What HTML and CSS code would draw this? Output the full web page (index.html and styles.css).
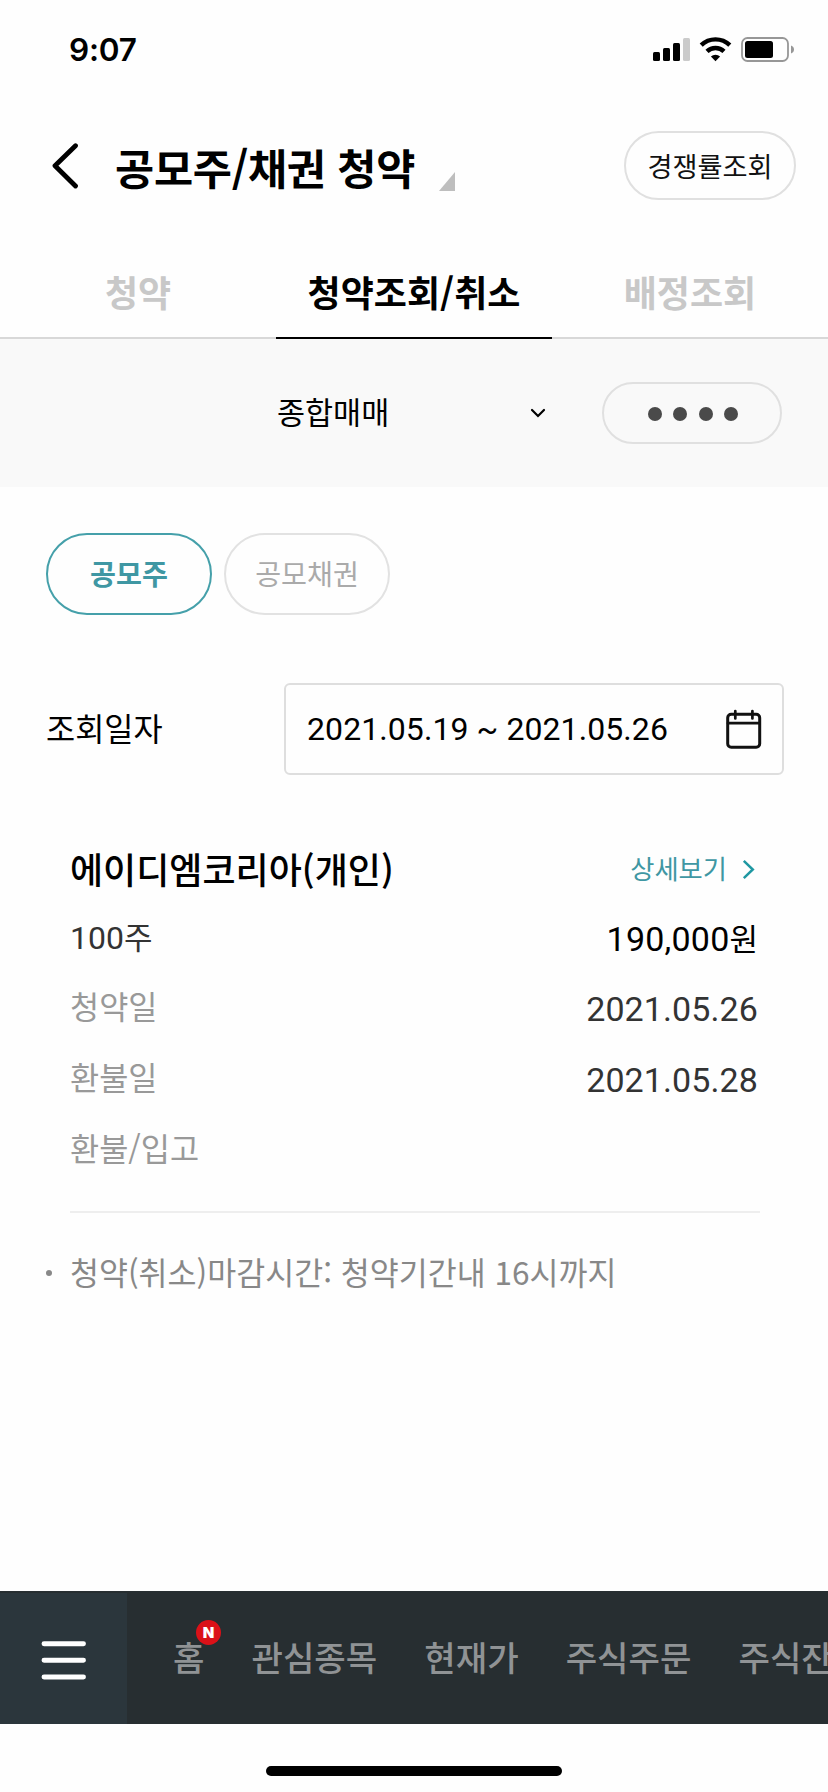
FILE: index.html
```html
<!DOCTYPE html>
<html lang="ko">
<head>
<meta charset="utf-8">
<title>공모주/채권 청약</title>
<link rel="stylesheet" href="styles.css">
</head>
<body>
<div class="status">
  <span class="time">9:07</span>
  <svg class="status-icons" width="142" height="26" viewBox="0 0 142 26">
    <rect x="0" y="15" width="7" height="9" rx="1.5"/>
    <rect x="10" y="11" width="7" height="13" rx="1.5"/>
    <rect x="20" y="6" width="7" height="18" rx="1.5"/>
    <rect x="30" y="1" width="7" height="23" rx="1.5" fill="#cbcbcb"/>
    <g fill="none" stroke="#000" stroke-width="4.4">
      <path d="M48.2 8.2a20.5 20.5 0 0 1 28.6 0"/>
      <path d="M54 14.4a12.2 12.2 0 0 1 17 0"/>
    </g>
    <path d="M62.500 24.200l-4.600-4.700a6.600 6.600 0 0 1 9.200 0z"/>
    <rect x="89" y="1" width="46" height="23" rx="5.500" fill="none" stroke="#979797" stroke-width="1.800"/>
    <rect x="92" y="4" width="28" height="17" rx="2.500"/>
    <path d="M138 8.500q3 1.200 3 4t-3 4z" fill="#979797"/>
  </svg>
</div>

<header class="header">
  <svg class="back" width="28" height="48" viewBox="0 0 28 48"><path d="M23.500 3.700L3 23.700l20.500 20.300" fill="none" stroke="#000" stroke-width="4.800" stroke-linecap="round" stroke-linejoin="round"/></svg>
  <h1 class="title">공모주/채권 청약</h1>
  <svg class="corner" width="16" height="19" viewBox="0 0 16 19"><path d="M16 0v19H0z" fill="#bebebe"/></svg>
  <button class="rate-btn">경쟁률조회</button>
</header>

<nav class="tabs">
  <div class="tab">청약</div>
  <div class="tab active">청약조회/취소</div>
  <div class="tab">배정조회</div>
</nav>

<section class="account">
  <span class="account-name">종합매매</span>
  <svg class="caret" width="16" height="11" viewBox="0 0 16 11"><path d="M2 2l6 6 6-6" fill="none" stroke="#000" stroke-width="2.200" stroke-linecap="round"/></svg>
  <div class="password"><i class="dot"></i><i class="dot"></i><i class="dot"></i><i class="dot"></i></div>
</section>

<main class="content">
  <div class="chips">
    <div class="chip selected">공모주</div>
    <div class="chip">공모채권</div>
  </div>

  <div class="date-row">
    <span class="date-label">조회일자</span>
    <div class="date-box">
      <span>2021.05.19 ~ 2021.05.26</span>
      <svg width="36" height="40" viewBox="0 0 36 40" fill="none" stroke="#111" stroke-width="3" stroke-linecap="round"><rect x="1.700" y="5.200" width="32" height="33" rx="3.500"/><path d="M2 14.200h31.500M9.300 2v7.500M26.400 2v7.500" stroke-width="2.700"/></svg>
    </div>
  </div>

  <section class="detail">
    <div class="row">
      <h2 class="stock">에이디엠코리아(개인)</h2>
      <a class="more">상세보기<svg class="more-arrow" width="13" height="21" viewBox="0 0 13 21"><path d="M1.800 1.800l9 8.700-9 8.700" fill="none" stroke="#1f98a2" stroke-width="2.500"/></svg></a>
    </div>
    <div class="row"><span class="quantity">100<small class="unit">주</small></span><span class="amount">190,000<small class="unit">원</small></span></div>
    <div class="row"><span class="label">청약일</span><span class="value">2021.05.26</span></div>
    <div class="row tall"><span class="label">환불일</span><span class="value">2021.05.28</span></div>
    <div class="row"><span class="label">환불/입고</span></div>
  </section>

  <p class="note"><i class="bullet"></i>청약(취소)마감시간: 청약기간내 16시까지</p>
</main>

<footer class="bottom">
  <div class="menu">
    <svg width="46" height="39" viewBox="0 0 46 39"><path d="M3 2.700h39.500M3 19.300h39.500M3 36h39.500" stroke="#fff" stroke-width="4.900" stroke-linecap="round"/></svg>
  </div>
  <div class="links">
    <span class="link">홈<b class="badge">N</b></span>
    <span class="link">관심종목</span>
    <span class="link">현재가</span>
    <span class="link">주식주문</span>
    <span class="link">주식잔고</span>
  </div>
</footer>
<div class="home-area"><div class="home-bar"></div></div>
</body>
</html>
```
FILE: styles.css
```css
* { box-sizing: border-box; }

body {
  margin: 0;
  width: 828px;
  height: 1792px;
  display: flex;
  flex-direction: column;
  overflow: hidden;
  background: #fefefe;
  color: #000;
  font-family: "Noto Sans CJK KR", sans-serif;
}

svg { display: block; flex: none; }
h1, h2, p { margin: 0; }

.status {
  height: 100px;
  padding: 0 33px 0 69px;
  display: flex;
  justify-content: space-between;
}
.time {
  font: 600 31.500px/40px Inter, sans-serif;
  letter-spacing: -0.2px;
  padding-top: 30px;
}
.status-icons { margin-top: 37px; }

.header {
  height: 137px;
  padding: 0 32px 0 52px;
  display: flex;
  align-items: flex-start;
}
.back { margin-top: 42px; }
.title {
  margin: 37px 0 0 35px;
  width: 324px;
  font-size: 42.6px;
  letter-spacing: -0.3px;
  line-height: 60px;
  font-weight: 700;
  white-space: nowrap;
}
.corner { margin-top: 72px; }
.rate-btn {
  margin: 31px 0 0 auto;
  width: 172px;
  height: 69px;
  padding: 0;
  border: 2px solid #e0e0e0;
  border-radius: 35px;
  background: transparent;
  color: #111;
  font: 400 27.2px/65px "Noto Sans CJK KR", sans-serif;
}

.tabs {
  height: 102px;
  display: grid;
  grid-template-columns: repeat(3, 1fr);
}
.tab {
  padding-top: 31px;
  border-bottom: 2px solid #d8d8d8;
  color: #c8c8c8;
  font-size: 36px;
  line-height: 46px;
  font-weight: 700;
  text-align: center;
}
.active { color: #000; border-color: #000; }

.account {
  height: 148px;
  padding: 0 46px 0 277px;
  display: flex;
  align-items: center;
  background: #f9f9f9;
}
.account-name {
  width: 253px;
  padding-bottom: 4px;
  font-size: 30.5px;
  line-height: 44px;
}
.password {
  margin-left: auto;
  width: 180px;
  height: 62px;
  padding: 2px 0 0 2px;
  border: 2px solid #e0e0e0;
  border-radius: 31px;
  display: flex;
  align-items: center;
  justify-content: center;
  gap: 11.4px;
}
.dot {
  width: 14px;
  height: 14px;
  border-radius: 50%;
  background: #4a4a4a;
}

.content {
  flex: 1;
  padding: 46px 44px 0 46px;
}
.chips { display: flex; gap: 12px; }
.chip {
  width: 166px;
  height: 82px;
  border: 2px solid #e2e2e2;
  border-radius: 41px;
  color: #aaa;
  font-size: 28.2px;
  line-height: 76px;
  text-align: center;
}
.selected {
  border-color: #45a0aa;
  color: #3f97a3;
  font-weight: 700;
}

.date-row {
  margin-top: 68px;
  display: flex;
  align-items: center;
  justify-content: space-between;
}
.date-label {
  padding-bottom: 4px;
  font-size: 31.700px;
  line-height: 44px;
}
.date-box {
  width: 500px;
  height: 92px;
  padding: 0 20px 0 21px;
  border: 2px solid #dedede;
  border-radius: 6px;
  display: flex;
  align-items: center;
  justify-content: space-between;
  font: 400 32px/44px Roboto, sans-serif;
  letter-spacing: 0.08px;
}

.detail {
  margin: 58px 24px 0 24px;
  height: 380px;
  padding: 0 2px 0 0;
  border-bottom: 2px solid #eee;
}
.row {
  height: 70px;
  display: flex;
  align-items: center;
  justify-content: space-between;
}
.tall { height: 72px; }
.stock { font-size: 36px; line-height: 50px; font-weight: 500; }
.more {
  display: flex;
  align-items: center;
  gap: 15px;
  padding-right: 3px;
  color: #3f97a3;
  font-size: 26.300px;
  line-height: 40px;
}
.more-arrow { margin-top: 3px; }
.quantity {
  color: #333;
  font: 400 32px/44px Roboto, "Noto Sans CJK KR", sans-serif;
}
.amount {
  padding-top: 3px;
  font: 400 34px/44px Roboto, "Noto Sans CJK KR", sans-serif;
  letter-spacing: 0.22px;
}
.unit { font-size: 31px; letter-spacing: 0; }
.label {
  padding-bottom: 6px;
  color: #999;
  font-size: 31.700px;
  line-height: 44px;
}
.value {
  padding-top: 2px;
  color: #333;
  font: 400 34px/44px Roboto, sans-serif;
  letter-spacing: 0.1px;
}

.note {
  margin-top: 36px;
  display: flex;
  align-items: center;
  color: #888;
  font-size: 31.500px;
  line-height: 44px;
  white-space: nowrap;
}
.bullet {
  width: 6px;
  height: 6px;
  margin: 3px 18px 0 0;
  border-radius: 50%;
  background: #888;
}

.bottom {
  height: 133px;
  display: flex;
  flex: none;
  background: #272e31;
}
.menu {
  width: 127px;
  flex: none;
  border-top: 2px solid #272e31;
  background: #2b363c;
  display: flex;
  align-items: center;
  justify-content: center;
  padding-top: 4px;
}
.links {
  flex: 1;
  min-width: 0;
  overflow: hidden;
  display: flex;
  align-items: center;
  gap: 47px;
  padding: 0 0 3px 46px;
  color: #909395;
  font-size: 34.200px;
  line-height: 50px;
  font-weight: 500;
}
.link { position: relative; flex: none; }
.badge {
  position: absolute;
  left: 23px;
  top: -11px;
  width: 25px;
  height: 25px;
  border-radius: 50%;
  background: #db1118;
  color: #fff;
  font: 900 15px/25px Inter, sans-serif;
  text-align: center;
}

.home-area {
  height: 68px;
  flex: none;
  display: flex;
  justify-content: center;
  padding-top: 42px;
}
.home-bar { width: 296px; height: 10px; border-radius: 5px; background: #000; }
```
